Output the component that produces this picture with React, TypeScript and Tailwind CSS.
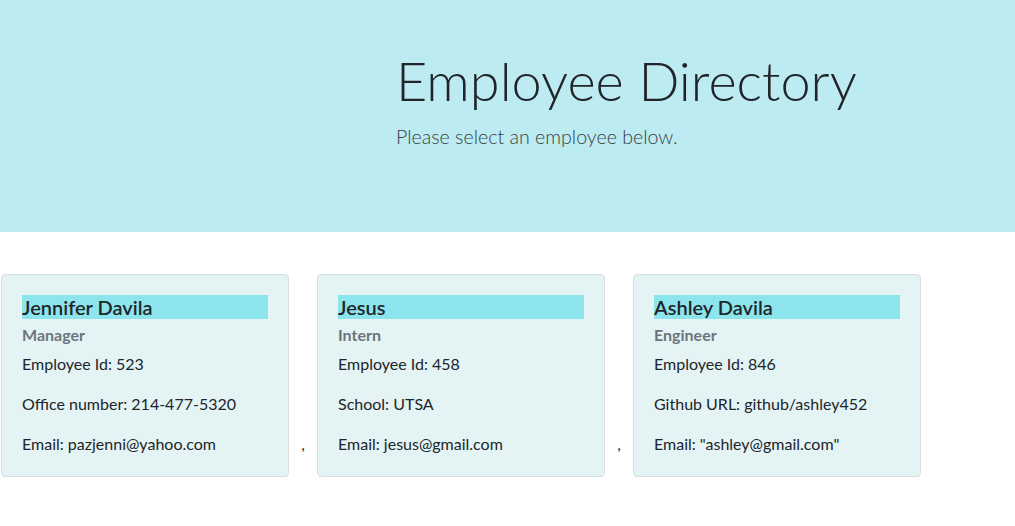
const employees = [
  {
    name: 'Jennifer Davila',
    role: 'Manager',
    id: 523,
    extra: 'Office number: 214-477-5320',
    email: 'Email: pazjenni@yahoo.com',
  },
  {
    name: 'Jesus',
    role: 'Intern',
    id: 458,
    extra: 'School: UTSA',
    email: 'Email: jesus@gmail.com',
  },
  {
    name: 'Ashley Davila',
    role: 'Engineer',
    id: 846,
    extra: 'Github URL: github/ashley452',
    email: 'Email: "ashley@gmail.com"',
  },
];

function EmployeeCard({ emp }: { emp: (typeof employees)[number] }) {
  return (
    <div className="w-[288px] shrink-0 rounded border border-[#d9dfe0] bg-[#e4f4f5] p-5">
      <h5 className="bg-[#8ce5ec] text-[20px] font-semibold leading-[24px] text-[#212529]">{emp.name}</h5>
      <h6 className="mt-[6px] text-[16px] font-bold leading-[19px] text-[#6c757d]">{emp.role}</h6>
      <p className="mt-2 leading-6">Employee Id: {emp.id}</p>
      <p className="mt-4 leading-6">{emp.extra}</p>
      <p className="mt-4 leading-6">{emp.email}</p>
    </div>
  );
}

export default function App() {
  return (
    <div className="min-h-screen w-full bg-white font-['Segoe_UI','Lato','Liberation_Sans',sans-serif] text-[16px] text-[#212529]">
      {/* header */}
      <header className="h-[232px] bg-[#bcebf1] pl-[396px] pt-[47px]">
        <h1 className="text-[54px] font-light leading-[67px] text-[#212529]">Employee Directory</h1>
        <p className="mt-2 text-[19.6px] font-light leading-[30px] text-[#3a3f44]">Please select an employee below.</p>
      </header>

      {/* cards */}
      <main className="mt-[42px] flex items-end pl-px">
        {employees.map((emp, i) => (
          <div key={emp.id} className="flex items-end">
            {i > 0 && <span className="w-[28px] pb-[21px] text-center leading-6">,</span>}
            <EmployeeCard emp={emp} />
          </div>
        ))}
      </main>
    </div>
  );
}
